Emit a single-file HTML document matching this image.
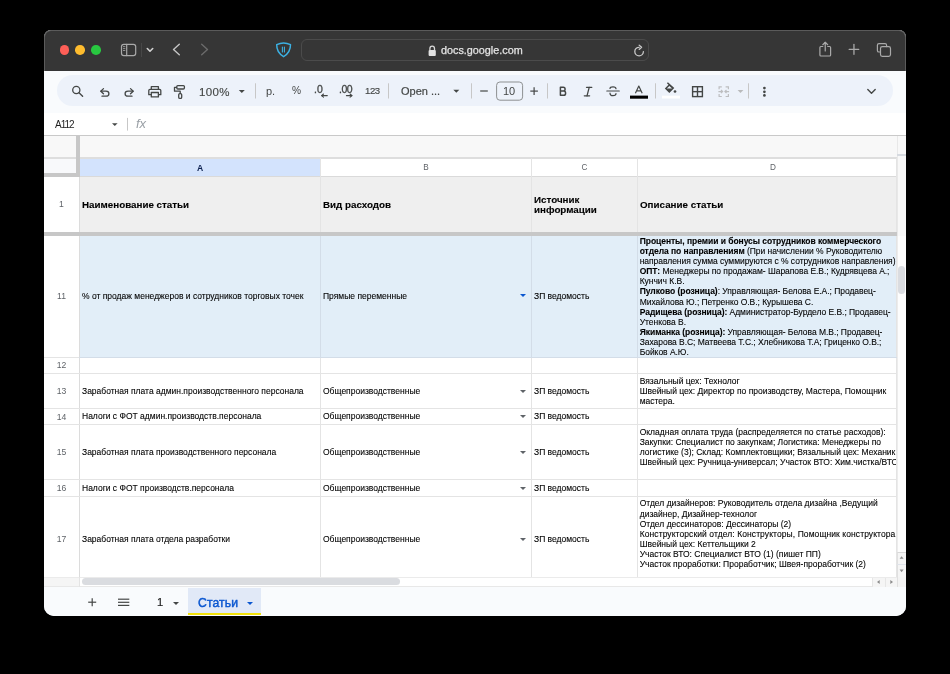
<!DOCTYPE html><html><head><meta charset="utf-8"><style>
*{margin:0;padding:0;box-sizing:border-box}
html,body{width:950px;height:674px;background:#000;overflow:hidden;font-family:"Liberation Sans",sans-serif}
.a{position:absolute}
#win{position:absolute;left:44px;top:30px;width:862px;height:586px;border-radius:7px 7px 10px 10px;overflow:hidden;background:#f9fbfd}
#title{position:absolute;left:44px;top:29.5px;width:862px;height:41.5px;background:#363636;border:1px solid #5b5b5b;border-bottom:none;border-radius:7px 7px 0 0}
.dot{position:absolute;width:9.6px;height:9.6px;border-radius:50%;top:45.2px}
.tt{position:absolute;font-size:11px;color:#444746;white-space:pre;line-height:12px}
.vd{position:absolute;width:1px;height:15px;background:#c7c7c7;top:83px}
.hl{position:absolute;height:1px;background:#e4e4e4}
.vl{position:absolute;width:1px;background:#e4e4e4}
.c{position:absolute;font-size:8.5px;color:#000;-webkit-text-stroke:0.1px #000;white-space:pre;line-height:10.07px;overflow:hidden;display:flex;align-items:center;padding-left:2px}
.c>div{width:100%}
.b{font-weight:bold}
.c,.rn,.t{will-change:transform}
.c b{letter-spacing:-0.045px}
.rn{position:absolute;left:44px;width:35px;font-size:8.6px;color:#5f6368;text-align:center;display:flex;align-items:center;justify-content:center;line-height:10px}
.dd{position:absolute;width:0;height:0;border-left:3px solid transparent;border-right:3px solid transparent;border-top:3px solid #5f6368}
</style></head><body>
<div id="win"></div>
<div id="title"></div>
<div class="dot" style="left:59.7px;background:#fe5f57"></div>
<div class="dot" style="left:75.2px;background:#febc2e"></div>
<div class="dot" style="left:91.2px;background:#28c840"></div>
<div class="a" style="left:301px;top:39px;width:348px;height:22px;border:1px solid #4b4b4b;border-radius:6px"></div>
<div class="a t" style="left:441px;top:44px;font-size:10.8px;line-height:12px;color:#e4e4e4;white-space:pre;-webkit-text-stroke:0.25px #e4e4e4">docs.google.com</div>
<div class="a" style="left:56.6px;top:75px;width:836.8px;height:31.3px;background:#edf2fa;border-radius:15.7px"></div>
<div class="a" style="left:44px;top:113px;width:862px;height:22px;background:#fff"></div>
<div class="a" style="left:44px;top:135px;width:862px;height:1px;background:#c9c9c9"></div>
<div class="a" style="left:44px;top:136px;width:862px;height:451px;background:#fff"></div>
<div class="a" style="left:44px;top:136px;width:853px;height:22px;background:#f8f8f8"></div>
<div class="hl" style="left:44px;top:157px;width:853px;height:1.6px;background:#dedede"></div>
<div class="a" style="left:44px;top:158.5px;width:32px;height:14.5px;background:#f8f9fb"></div>
<div class="a" style="left:79.5px;top:158.5px;width:241px;height:18px;background:#d3e3fd"></div>
<div class="hl" style="left:79px;top:176.2px;width:818px;height:1.6px;background:#dadada"></div>
<div class="a" style="left:79.5px;top:177px;width:817px;height:55px;background:#efefef"></div>
<div class="a" style="left:79.5px;top:236px;width:817px;height:121px;background:#e2eef8"></div>
<div class="vl" style="left:320px;top:158px;height:419px"></div>
<div class="vl" style="left:531px;top:158px;height:419px"></div>
<div class="vl" style="left:637px;top:158px;height:419px"></div>
<div class="vl" style="left:896px;top:158px;height:419px"></div>
<div class="vl" style="left:79px;top:177px;height:410px;background:#dcdcdc"></div>
<div class="hl" style="left:44px;top:357px;width:853px"></div>
<div class="hl" style="left:44px;top:373px;width:853px"></div>
<div class="hl" style="left:44px;top:408px;width:853px"></div>
<div class="hl" style="left:44px;top:424px;width:853px"></div>
<div class="hl" style="left:44px;top:479px;width:853px"></div>
<div class="hl" style="left:44px;top:496px;width:853px"></div>
<div class="hl" style="left:44px;top:577px;width:853px"></div>
<div class="vl" style="left:320px;top:236px;height:121px;background:#d3dde8"></div>
<div class="vl" style="left:531px;top:236px;height:121px;background:#d3dde8"></div>
<div class="vl" style="left:637px;top:236px;height:121px;background:#d3dde8"></div>
<div class="hl" style="left:79px;top:357px;width:818px;background:#d3dde8"></div>
<div class="a" style="left:44px;top:232.3px;width:853px;height:3.7px;background:#c7c7c7"></div>
<div class="a" style="left:76px;top:135.5px;width:3.6px;height:41.2px;background:#c7c7c7"></div>
<div class="a" style="left:44px;top:173px;width:35.6px;height:3.6px;background:#c7c7c7"></div>
<div class="a b t" style="left:80px;top:158.5px;width:240px;height:18px;font-size:8.6px;color:#0b1f4f;text-align:center;line-height:18px">A</div>
<div class="a t" style="left:321px;top:158.5px;width:210px;height:18px;font-size:8.2px;color:#5f6368;text-align:center;line-height:18px">B</div>
<div class="a t" style="left:532px;top:158.5px;width:105px;height:18px;font-size:8.2px;color:#5f6368;text-align:center;line-height:18px">C</div>
<div class="a t" style="left:638px;top:158.5px;width:270px;height:18px;font-size:8.2px;color:#5f6368;text-align:center;line-height:18px">D</div>
<div class="rn" style="top:176.2px;height:55px">1</div>
<div class="rn" style="top:235.2px;height:121px">11</div>
<div class="rn" style="top:357.2px;height:15px">12</div>
<div class="rn" style="top:374px;height:34px">13</div>
<div class="rn" style="top:409px;height:15px">14</div>
<div class="rn" style="top:425px;height:54px">15</div>
<div class="rn" style="top:480px;height:16px">16</div>
<div class="rn" style="top:498.8px;height:80px">17</div>
<div class="c" style="left:80px;top:177px;width:240px;height:55px;font-size:9.8px;line-height:10.6px;font-weight:bold;padding-top:1.4px"><div>Наименование статьи</div></div>
<div class="c" style="left:321px;top:177px;width:210px;height:55px;font-size:9.8px;line-height:10.6px;font-weight:bold;padding-top:1.4px"><div>Вид расходов</div></div>
<div class="c" style="left:532px;top:177px;width:105px;height:55px;font-size:9.8px;line-height:10.6px;font-weight:bold;padding-top:1.4px"><div>Источник
информации</div></div>
<div class="c" style="left:638px;top:177px;width:258px;height:55px;font-size:9.8px;line-height:10.6px;font-weight:bold;padding-top:1.4px"><div>Описание статьи</div></div>
<div class="c" style="left:80px;top:236px;width:240px;height:121px;padding-bottom:1.6px"><div>% от продаж менеджеров и сотрудников торговых точек</div></div>
<div class="c" style="left:321px;top:236px;width:210px;height:121px;padding-bottom:1.6px"><div>Прямые переменные</div></div>
<div class="c" style="left:532px;top:236px;width:105px;height:121px;padding-bottom:1.6px"><div>ЗП ведомость</div></div>
<div class="c" style="left:638px;top:236px;width:258px;height:121px;padding-left:1.7px;letter-spacing:-0.04px"><div><b>Проценты, премии и бонусы сотрудников коммерческого
отдела по направлениям </b>(При начислении % Руководителю
направления сумма суммируются с % сотрудников направления)
<b>ОПТ:</b> Менеджеры по продажам- Шарапова Е.В.; Кудрявцева А.;
Кунчич К.В.
<b>Пулково (розница)</b>: Управляющая- Белова Е.А.; Продавец-
Михайлова Ю.; Петренко О.В.; Курышева С.
<b>Радищева (розница):</b> Администратор-Бурдело Е.В.; Продавец-
Утенкова В.
<b>Якиманка (розница):</b> Управляющая- Белова М.В.; Продавец-
Захарова В.С; Матвеева Т.С.; Хлебникова Т.А; Гриценко О.В.;
Бойков А.Ю.</div></div>
<div class="dd" style="left:520px;top:294.2px;border-top-color:#0b57d0"></div>
<div class="c" style="left:80px;top:374px;width:240px;height:34px;"><div>Заработная плата админ.производственного персонала</div></div>
<div class="c" style="left:321px;top:374px;width:210px;height:34px;"><div>Общепроизводственные</div></div>
<div class="c" style="left:532px;top:374px;width:105px;height:34px;"><div>ЗП ведомость</div></div>
<div class="c" style="left:638px;top:374px;width:258px;height:34px;padding-left:1.7px;"><div>Вязальный цех: Технолог
Швейный цех: Директор по производству, Мастера, Помощник
мастера.</div></div>
<div class="dd" style="left:520px;top:389.5px;border-top-color:#5f6368"></div>
<div class="c" style="left:80px;top:409px;width:240px;height:15px;"><div>Налоги с ФОТ админ.производств.персонала</div></div>
<div class="c" style="left:321px;top:409px;width:210px;height:15px;"><div>Общепроизводственные</div></div>
<div class="c" style="left:532px;top:409px;width:105px;height:15px;"><div>ЗП ведомость</div></div>
<div class="dd" style="left:520px;top:415.0px;border-top-color:#5f6368"></div>
<div class="c" style="left:80px;top:425px;width:240px;height:54px;"><div>Заработная плата производственного персонала</div></div>
<div class="c" style="left:321px;top:425px;width:210px;height:54px;"><div>Общепроизводственные</div></div>
<div class="c" style="left:532px;top:425px;width:105px;height:54px;"><div>ЗП ведомость</div></div>
<div class="c" style="left:638px;top:425px;width:258px;height:54px;padding-left:1.7px;"><div>Окладная оплата труда (распределяется по статье расходов):
Закупки: Специалист по закупкам; Логистика: Менеджеры по
логистике (3); Склад: Комплектовщики; Вязальный цех: Механик;
Швейный цех: Ручница-универсал; Участок ВТО: Хим.чистка/ВТО
&nbsp;</div></div>
<div class="dd" style="left:520px;top:450.5px;border-top-color:#5f6368"></div>
<div class="c" style="left:80px;top:480px;width:240px;height:16px;"><div>Налоги с ФОТ производств.персонала</div></div>
<div class="c" style="left:321px;top:480px;width:210px;height:16px;"><div>Общепроизводственные</div></div>
<div class="c" style="left:532px;top:480px;width:105px;height:16px;"><div>ЗП ведомость</div></div>
<div class="dd" style="left:520px;top:486.5px;border-top-color:#5f6368"></div>
<div class="c" style="left:80px;top:497px;width:240px;height:80px;padding-top:4.6px"><div>Заработная плата отдела разработки</div></div>
<div class="c" style="left:321px;top:497px;width:210px;height:80px;padding-top:4.6px"><div>Общепроизводственные</div></div>
<div class="c" style="left:532px;top:497px;width:105px;height:80px;padding-top:4.6px"><div>ЗП ведомость</div></div>
<div class="c" style="left:638px;top:497px;width:258px;height:80px;padding-left:1.7px;padding-top:3.4px"><div>Отдел дизайнеров: Руководитель отдела дизайна ,Ведущий
дизайнер, Дизайнер-технолог
Отдел дессинаторов: Дессинаторы (2)
<span style="letter-spacing:0.085px">Конструкторский отдел: Конструкторы, Помощник конструктора</span>
Швейный цех: Кеттельщики 2
Участок ВТО: Специалист ВТО (1) (пишет ПП)
Участок проработки: Проработчик; Швея-проработчик (2)
&nbsp;</div></div>
<div class="dd" style="left:520px;top:537.8px;border-top-color:#5f6368"></div>
<div class="a" style="left:896.5px;top:136px;width:9.5px;height:100px;background:#f8f8f8;border-left:1px solid #e8e8e8"></div>
<div class="a" style="left:896.5px;top:236px;width:9.5px;height:316px;background:#fdfdfd;border-left:1px solid #ececec"></div>
<div class="a" style="left:897px;top:154px;width:9px;height:1.5px;background:#d6dae0"></div>
<div class="a" style="left:898px;top:266px;width:7px;height:28px;background:#dadce0;border-radius:3.5px"></div>
<div class="a" style="left:896.5px;top:552px;width:9.5px;height:25px;background:#f5f5f5;border-left:1px solid #e0e0e0;border-top:1px solid #d8d8d8"></div>
<div class="a" style="left:897px;top:564px;width:9px;height:1px;background:#dfe3ea"></div>
<div class="a" style="left:896.5px;top:577px;width:9.5px;height:10px;background:#f3f3f3;border-left:1px solid #e0e0e0"></div>
<div class="a" style="left:44px;top:577px;width:853px;height:10px;background:#fff;border-top:1px solid #ebebeb;border-bottom:1px solid #e8e8e8"></div>
<div class="a" style="left:44px;top:578px;width:35px;height:8px;background:#f5f5f5"></div>
<div class="vl" style="left:79px;top:577px;height:10px"></div>
<div class="a" style="left:81.8px;top:578.2px;width:318.2px;height:7px;background:#dadce0;border-radius:3.5px"></div>
<div class="a" style="left:872px;top:577.5px;width:25px;height:9.5px;background:#f5f5f5;border-left:1px solid #e6e6e6"></div>
<div class="a" style="left:885px;top:577.5px;width:1px;height:9.5px;background:#e6e6e6"></div>
<div class="a" style="left:44px;top:587px;width:862px;height:29px;background:#f9fbfd;border-radius:0 0 10px 10px"></div>
<div class="a" style="left:188.4px;top:588px;width:73px;height:27px;background:#e1e9f7"></div>
<div class="a" style="left:188.4px;top:613.2px;width:73px;height:2px;background:#f2e20a"></div>
<div class="a t" style="left:197.6px;top:595.8px;font-size:12.2px;line-height:14px;color:#0b57d0;-webkit-text-stroke:0.45px #0b57d0;letter-spacing:0.1px">Статьи</div>
<div class="dd" style="left:246.5px;top:601.5px;border-left-width:3px;border-right-width:3px;border-top:3.5px solid #0b57d0"></div>
<div class="a t" style="left:157.3px;top:595px;font-size:11.2px;line-height:14px;color:#1f1f1f;-webkit-text-stroke:0.2px #1f1f1f">1</div>
<div class="dd" style="left:172.8px;top:601.5px;border-top:3.5px solid #444746"></div>
<svg class="a" style="left:0;top:0" width="950" height="674" viewBox="0 0 950 674">
<g fill="none" stroke="#a9a9a9" stroke-width="1.2" stroke-linecap="round" stroke-linejoin="round">
  <rect x="121.5" y="44.3" width="14.2" height="11.3" rx="2.3"/>
  <line x1="126.7" y1="44.3" x2="126.7" y2="55.6"/>
  <line x1="123.4" y1="46.6" x2="124.9" y2="46.6" stroke-width="0.8"/>
  <line x1="123.4" y1="48.6" x2="124.9" y2="48.6" stroke-width="0.8"/>
  <line x1="123.4" y1="50.5" x2="124.9" y2="50.5" stroke-width="0.8"/>
</g>
<line x1="141.5" y1="43" x2="141.5" y2="57" stroke="#474747" stroke-width="1"/>
<polyline points="147.3,48.5 150,51.2 152.7,48.5" fill="none" stroke="#d2d2d2" stroke-width="1.6" stroke-linecap="round" stroke-linejoin="round"/>
<polyline points="179.3,44.3 173.5,49.5 179.3,54.8" fill="none" stroke="#c4c4c4" stroke-width="1.4" stroke-linecap="round" stroke-linejoin="round"/>
<polyline points="201.7,44.3 207.5,49.5 201.7,54.8" fill="none" stroke="#6b6b6b" stroke-width="1.4" stroke-linecap="round" stroke-linejoin="round"/>
<path d="M276.7 44.6 Q283.6 41.4 290.5 44.6 Q290.6 52.6 283.6 56.7 Q276.5 52.6 276.7 44.6 Z" fill="none" stroke="#3cb1e3" stroke-width="1.5" stroke-linejoin="round"/>
<line x1="282.4" y1="47" x2="282.4" y2="52" stroke="#3cb1e3" stroke-width="1.1" stroke-linecap="round"/>
<line x1="284.4" y1="47" x2="284.4" y2="52" stroke="#3cb1e3" stroke-width="1.1" stroke-linecap="round"/>
<rect x="428.6" y="50.1" width="7.2" height="6" rx="1" fill="#e2e2e2"/>
<path d="M429.9 50.3 V48.6 A2.3 2.4 0 0 1 434.5 48.6 V50.3" fill="none" stroke="#d8d8d8" stroke-width="1.3"/>
<path d="M639.1 47.3 A4.3 4.3 0 1 0 643.4 51.6" fill="none" stroke="#c8c8c8" stroke-width="1.3" stroke-linecap="round"/>
<polyline points="639.2,45.2 641.6,47.3 639.2,49.4" fill="none" stroke="#c8c8c8" stroke-width="1.3" stroke-linecap="round" stroke-linejoin="round"/>
<g fill="none" stroke="#a9a9a9" stroke-width="1.2" stroke-linecap="round" stroke-linejoin="round">
  <path d="M822.8 46.5 H820.8 Q819.9 46.5 819.9 47.5 V55 Q819.9 56 820.9 56 H829.6 Q830.6 56 830.6 55 V47.5 Q830.6 46.5 829.6 46.5 H827.7"/>
  <line x1="825.25" y1="42.3" x2="825.25" y2="51"/>
  <polyline points="822.8,44.7 825.25,42.3 827.7,44.7"/>
  <line x1="849.2" y1="49.4" x2="858.7" y2="49.4" stroke-width="1.3"/>
  <line x1="853.95" y1="44.5" x2="853.95" y2="54.3" stroke-width="1.3"/>
  <path d="M880.4 52 H879 Q877.4 52 877.4 50.4 V45.2 Q877.4 43.6 879 43.6 H885 Q886.6 43.6 886.6 45.2 V46.6"/>
  <rect x="880.5" y="46.7" width="10" height="9.7" rx="1.8"/>
</g>
<!-- toolbar -->
<g fill="none" stroke="#444746" stroke-width="1.3" stroke-linecap="round" stroke-linejoin="round">
  <circle cx="76.3" cy="90" r="3.6"/>
  <line x1="79" y1="92.8" x2="82.6" y2="96.3" stroke-width="1.4"/>
  <path d="M103.5 88.6 L100.8 91.2 L103.5 93.8"/>
  <path d="M101 91.2 H106 Q108.9 91.2 108.9 93.7 Q108.9 96.2 106 96.2 H102"/>
  <path d="M130.5 88.6 L133.2 91.2 L130.5 93.8"/>
  <path d="M133 91.2 H128 Q125.1 91.2 125.1 93.7 Q125.1 96.2 128 96.2 H132"/>
  <path d="M151.3 89.2 V86.7 H158.4 V89.2"/>
  <path d="M151.2 94.7 H148.8 V90.5 Q148.8 89.3 150 89.3 H159.6 Q160.8 89.3 160.8 90.5 V94.7 H158.5"/>
  <rect x="151.3" y="92.5" width="7.1" height="4.4"/>
  <rect x="176.8" y="85.6" width="7.6" height="3.4" rx="1"/>
  <path d="M176.6 87.3 H174.5 V91.2 H180.2 V93.4"/>
  <rect x="178.7" y="93.6" width="3" height="4.8" rx="1.2"/>
</g>
<path d="M238.8 90 H244.8 L241.8 93 Z" fill="#444746"/>
<line x1="255.5" y1="83.3" x2="255.5" y2="98.5" stroke="#c7c7c7"/>
<line x1="388.5" y1="83.3" x2="388.5" y2="98.5" stroke="#c7c7c7"/>
<line x1="471.5" y1="83.3" x2="471.5" y2="98.5" stroke="#c7c7c7"/>
<line x1="547.5" y1="83.3" x2="547.5" y2="98.5" stroke="#c7c7c7"/>
<line x1="655.5" y1="83.3" x2="655.5" y2="98.5" stroke="#c7c7c7"/>
<line x1="748.5" y1="83.3" x2="748.5" y2="98.5" stroke="#c7c7c7"/>
<path d="M453.3 89.7 H459.3 L456.3 92.7 Z" fill="#444746"/>
<g fill="none" stroke="#444746" stroke-width="1.1" stroke-linecap="round" stroke-linejoin="round">
  <polyline points="323.5,94 321.6,95.6 323.5,97.2"/>
  <line x1="321.8" y1="95.6" x2="327.3" y2="95.6"/>
  <polyline points="350.1,94 352,95.6 350.1,97.2"/>
  <line x1="346.4" y1="95.6" x2="351.8" y2="95.6"/>
</g>
<g stroke="#444746" stroke-width="1.2" stroke-linecap="butt">
  <line x1="480.2" y1="91" x2="487.8" y2="91"/>
  <line x1="530.3" y1="91.1" x2="537.9" y2="91.1"/>
  <line x1="534.1" y1="87.2" x2="534.1" y2="95"/>
</g>
<rect x="496.6" y="82" width="26" height="18.2" rx="3.3" fill="none" stroke="#8d9091" stroke-width="1"/>
<path d="M560.4 87.3 H563.3 Q565.1 87.3 565.1 89.2 Q565.1 91 563.3 91 H560.4 Z M560.4 91 H563.7 Q565.6 91 565.6 93.2 Q565.6 95.3 563.7 95.3 H560.4 Z" fill="none" stroke="#444746" stroke-width="1.5" stroke-linejoin="round"/>
<g fill="none" stroke="#444746" stroke-width="1.3" stroke-linecap="round">
  <line x1="586.5" y1="87.3" x2="591.8" y2="87.3"/>
  <line x1="584.3" y1="95.8" x2="589.6" y2="95.8"/>
  <line x1="589.2" y1="87.3" x2="587" y2="95.8"/>
  <line x1="606.8" y1="91" x2="619.3" y2="91" stroke-width="1.1"/>
  <path d="M616 88.7 Q616 86.8 613 86.8 Q610 86.8 610 88.5" stroke-width="1.2"/>
  <path d="M610 93.2 Q610 95.7 613 95.7 Q616 95.7 616 93.6" stroke-width="1.2"/>
</g>
<path d="M635.4 93.2 L638.8 86 L642.2 93.2 M636.6 90.8 H641" fill="none" stroke="#444746" stroke-width="1.2" stroke-linejoin="round"/>
<rect x="630" y="95.6" width="18" height="3.1" fill="#000"/>
<rect x="662" y="95.7" width="18" height="2.8" fill="#ffffff"/>
<path d="M667.9 82.2 L666.9 83.2 L668.5 84.8 L664.8 88.5 L669.3 93 L674.3 88 Z" fill="#444746"/>
<path d="M666.8 88.5 L669.4 85.9 L672 88.5 Z" fill="#edf2fa"/>
<circle cx="675" cy="91.5" r="1.35" fill="#444746"/>
<g fill="none" stroke="#444746" stroke-width="1.4">
  <rect x="692.6" y="86.7" width="9.8" height="9.9"/>
  <line x1="697.5" y1="86.7" x2="697.5" y2="96.6"/>
  <line x1="692.6" y1="91.65" x2="702.4" y2="91.65"/>
</g>
<g fill="none" stroke="#bdbec0" stroke-width="1.2">
  <path d="M721.8 86.9 H719.1 V89.3 M719.1 93.9 V96.5 H721.8"/>
  <path d="M725.6 86.9 H728.4 V89.3 M728.4 93.9 V96.5 H725.6"/>
  <path d="M718.4 91.6 H722.6 M721 90 L722.6 91.6 L721 93.2"/>
  <path d="M729.1 91.6 H724.9 M726.5 90 L724.9 91.6 L726.5 93.2"/>
</g>
<path d="M737.6 90 H743.4 L740.5 92.9 Z" fill="#b9babb"/>
<g fill="#444746">
  <circle cx="764.4" cy="88.1" r="1.35"/>
  <circle cx="764.4" cy="91.8" r="1.35"/>
  <circle cx="764.4" cy="95.4" r="1.35"/>
</g>
<polyline points="867.8,89.6 871.5,93.3 875.2,89.6" fill="none" stroke="#444746" stroke-width="1.4" stroke-linecap="round" stroke-linejoin="round"/>
<!-- formula bar -->
<path d="M112 123.2 H117.6 L114.8 126 Z" fill="#444746"/>
<line x1="127.5" y1="117.9" x2="127.5" y2="130.6" stroke="#c7c7c7"/>
<!-- bottom bar -->
<g stroke="#444746" stroke-width="1.2" fill="none">
  <line x1="88.2" y1="602.2" x2="96.2" y2="602.2"/>
  <line x1="92.2" y1="598.2" x2="92.2" y2="606.2"/>
  <line x1="118" y1="599.2" x2="129.3" y2="599.2"/>
  <line x1="118" y1="602.3" x2="129.3" y2="602.3"/>
  <line x1="118" y1="605.4" x2="129.3" y2="605.4"/>
</g>
<!-- scroll arrows -->
<path d="M899.6 558.8 L901.6 556.2 L903.6 558.8 Z" fill="#8a8a8a"/>
<path d="M899.6 569.6 L901.6 572.2 L903.6 569.6 Z" fill="#8a8a8a"/>
<path d="M879.7 579.9 L877 581.9 L879.7 583.9 Z" fill="#8a8a8a"/>
<path d="M890.3 579.9 L893 581.9 L890.3 583.9 Z" fill="#8a8a8a"/>
</svg>
<div class="a t" style="left:199.3px;top:85.5px;font-size:11.5px;line-height:12px;color:#444746;white-space:pre;letter-spacing:0.35px;-webkit-text-stroke:0.15px #444746">100%</div>
<div class="a t" style="left:266.3px;top:84.5px;font-size:11px;line-height:12px;color:#444746;white-space:pre;">p.</div>
<div class="a t" style="left:291.5px;top:84.8px;font-size:10.2px;line-height:12px;color:#444746;white-space:pre;">%</div>
<div class="a t" style="left:313.8px;top:83px;font-size:10.5px;line-height:12px;color:#444746;white-space:pre;-webkit-text-stroke:0.3px #444746">.0</div>
<div class="a t" style="left:339.2px;top:83px;font-size:10.5px;line-height:12px;color:#444746;white-space:pre;-webkit-text-stroke:0.3px #444746;letter-spacing:-0.5px">.00</div>
<div class="a t" style="left:364.9px;top:85.3px;font-size:9.6px;line-height:12px;color:#444746;white-space:pre;-webkit-text-stroke:0.15px #444746;letter-spacing:-0.45px">123</div>
<div class="a t" style="left:400.5px;top:85px;font-size:11px;line-height:12px;color:#444746;white-space:pre;-webkit-text-stroke:0.2px #444746">Open ...</div>
<div class="a t" style="left:503.3px;top:85px;font-size:11px;line-height:12px;color:#444746;white-space:pre;">10</div>
<div class="a t" style="left:55px;top:118.6px;font-size:10px;line-height:12px;color:#1f1f1f;white-space:pre;letter-spacing:-1px">A112</div>
<div class="a t" style="left:135.5px;top:117.5px;font-size:13px;line-height:12px;color:#9aa0a6;white-space:pre;font-family:"Liberation Serif",serif"><i>fx</i></div>
</body></html>
